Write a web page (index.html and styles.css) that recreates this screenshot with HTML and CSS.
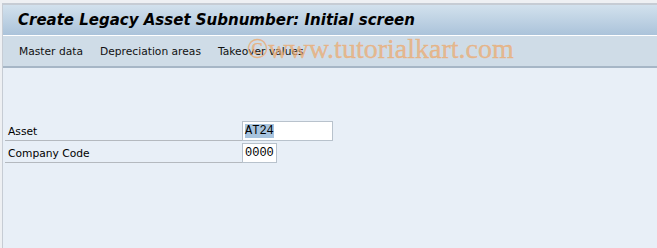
FILE: index.html
```html
<!DOCTYPE html>
<html lang="en">
<head>
    <meta charset="UTF-8">
    <title>Create Legacy Asset Subnumber</title>
    <link rel="stylesheet" href="styles.css">
</head>
<body>
    <div class="frame">
        <div class="titlebar">
            <h1>Create Legacy Asset Subnumber: Initial screen</h1>
        </div>
        <div class="toolbar">
            <span class="menu-item">Master data</span>
            <span class="menu-item">Depreciation areas</span>
            <span class="menu-item">Takeover values</span>
            <span class="watermark">&copy;www.tutorialkart.com</span>
        </div>
        <div class="content">
            <div class="row">
                <label class="field-label">Asset</label>
                <span class="field-input wide"><span class="selected">AT24</span></span>
            </div>
            <div class="row">
                <label class="field-label">Company Code</label>
                <span class="field-input short">0000</span>
            </div>
        </div>
    </div>
</body>
</html>
```
FILE: styles.css
```css
body {
    margin: 0;
    background: #eef0f3;
    font-family: Tahoma, "DejaVu Sans", sans-serif;
    font-size: 10.7px;
    color: #000;
}
.frame {
    margin: 3px 0 0 2px;
    border-top: 2px solid #c6ccd4;
    border-left: 1px solid #c6ccd4;
    height: 243px;
    display: flex;
    flex-direction: column;
}
.titlebar {
    height: 30px;
    background: linear-gradient(#d2e1ed, #abc3da);
    border-bottom: 1px solid #ffffff;
    display: flex;
    align-items: center;
    padding-left: 15px;
}
h1 {
    margin: 0;
    font-family: "DejaVu Sans", sans-serif;
    font-size: 15px;
    font-weight: bold;
    font-style: italic;
    color: #000;
}
.toolbar {
    position: relative;
    height: 30px;
    background: #cfdce7;
    border-bottom: 2px solid #a6b6c6;
    display: flex;
    align-items: center;
    gap: 17px;
    padding-left: 16px;
}
.menu-item {
    color: #111;
}
.watermark {
    position: absolute;
    left: 244px;
    top: -3px;
    font-family: "Liberation Serif", serif;
    font-size: 28px;
    color: rgba(236, 170, 110, 0.72);
    -webkit-text-stroke: 0.4px rgba(236, 170, 110, 0.72);
}
.content {
    flex: 1;
    background: #e8eff7;
    padding-top: 53px;
}
.row {
    display: flex;
    align-items: flex-end;
    margin-bottom: 2px;
}
.field-label {
    width: 234px;
    margin-left: 2px;
    padding-left: 3px;
    border-bottom: 1px solid #b4b9bf;
    height: 18px;
    line-height: 20px;
}
.field-input {
    height: 18px;
    background: #fff;
    border: 1px solid #b8c2cc;
    font-family: "Liberation Mono", monospace;
    font-size: 12px;
    line-height: 18px;
    padding-left: 2px;
    box-sizing: content-box;
}
.wide {
    width: 87px;
}
.short {
    width: 31px;
}
.selected {
    background: #a8c4de;
}
```
